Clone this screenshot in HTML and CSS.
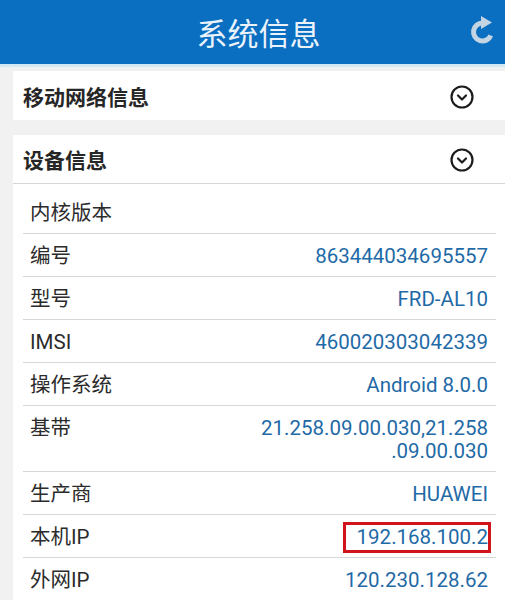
FILE: index.html
```html
<!DOCTYPE html>
<html lang="zh-CN">
<head>
<meta charset="UTF-8" />
<meta name="viewport" content="width=device-width, initial-scale=1.0" />
<title>系统信息</title>
<link rel="stylesheet" href="styles.css">
</head>
<body>
<!-- Title bar -------------------------------------------------------- -->
<header class="topbar">
  <h1>系统信息</h1>
  <button class="refresh" aria-label="刷新">
    <svg width="30" height="32" viewBox="0 0 30 32">
      <path d="M14 9 A9 9 0 1 0 21.8 21.5" fill="none" stroke="#c3d4e3" stroke-width="5" />
      <polygon points="12,2 23,8.5 12,15" fill="#c3d4e3" />
    </svg>
  </button>
</header>

<main class="content">
  <!-- Mobile network (collapsed) ----------------------------------- -->
  <section class="card">
    <div class="card-head">
      <h2>移动网络信息</h2>
      <svg class="chev" width="26" height="26" viewBox="0 0 26 26">
        <circle cx="13" cy="13" r="10.5" fill="none" stroke="#1c1c1c" stroke-width="2.2" />
        <polyline points="9,11.5 13,15.5 17,11.5" fill="none" stroke="#1c1c1c" stroke-width="2.2" stroke-linecap="round" stroke-linejoin="round" />
      </svg>
    </div>
  </section>

  <!-- Device info (expanded) --------------------------------------- -->
  <section class="card">
    <div class="card-head divided">
      <h2>设备信息</h2>
      <svg class="chev" width="26" height="26" viewBox="0 0 26 26">
        <circle cx="13" cy="13" r="10.5" fill="none" stroke="#1c1c1c" stroke-width="2.2" />
        <polyline points="9,11.5 13,15.5 17,11.5" fill="none" stroke="#1c1c1c" stroke-width="2.2" stroke-linecap="round" stroke-linejoin="round" />
      </svg>
    </div>
    <ul class="info-list">
      <li class="row"><span class="label">内核版本</span><span class="value"></span></li>
      <li class="row"><span class="label">编号</span><span class="value">863444034695557</span></li>
      <li class="row"><span class="label">型号</span><span class="value">FRD-AL10</span></li>
      <li class="row"><span class="label">IMSI</span><span class="value">460020303042339</span></li>
      <li class="row"><span class="label">操作系统</span><span class="value">Android 8.0.0</span></li>
      <li class="row"><span class="label">基带</span><span class="value">21.258.09.00.030,21.258<br>.09.00.030</span></li>
      <li class="row"><span class="label">生产商</span><span class="value">HUAWEI</span></li>
      <li class="row"><span class="label">本机IP</span><span class="value marked">192.168.100.2</span></li>
      <li class="row"><span class="label">外网IP</span><span class="value">120.230.128.62</span></li>
    </ul>
  </section>
</main>
</body>
</html>
```

FILE: styles.css
```css
:root {
  --bar: #0a6fc1;
  --bg: #f1f1f1;
  --card: #ffffff;
  --line: #d6d6d6;
  --text: #2b2b2b;
  --value: #1f6aa6;
  --mark: #d0141c;
}
* { box-sizing: border-box; margin: 0; padding: 0; }
html, body {
  background: var(--bg);
  color: var(--text);
  font-family: Roboto, "Noto Sans CJK SC", "Noto Sans", sans-serif;
}

/* --------------------  Title bar  ------------------- */
.topbar {
  height: 67px;
  background: var(--bar);
  border-bottom: 3px solid #d3e8f5;
  display: flex;
  align-items: center;
  justify-content: center;
  position: relative;
}
.topbar h1 {
  font-family: "Noto Sans CJK SC", sans-serif;
  font-size: 31px;
  font-weight: 400;
  color: #eaf3fb;
  margin-left: 12px;
  margin-top: -2px;
}
.refresh {
  position: absolute;
  right: 6px;
  top: 14px;
  border: none;
  background: none;
  line-height: 0;
}

/* --------------------  Cards  ----------------------- */
.content {
  padding: 4px 0 0 13px;
  display: flex;
  flex-direction: column;
  gap: 15px;
}
.card { background: var(--card); }
.card-head {
  height: 49px;
  display: flex;
  align-items: center;
  justify-content: space-between;
  padding: 0 30px 0 10px;
}
.card-head.divided { border-bottom: 1px solid var(--line); }
.card-head h2 {
  font-family: "Noto Sans CJK SC", sans-serif;
  font-size: 21px;
  font-weight: 700;
  color: #262626;
}
.chev { margin-top: 2px; }

/* --------------------  Info rows  ------------------- */
.info-list { list-style: none; padding: 7px 9px 0 10px; }
.row {
  display: flex;
  justify-content: space-between;
  align-items: flex-start;
  padding: 11px 8px 8px 7px;
  line-height: 23px;
  border-bottom: 1px solid var(--line);
  font-size: 20.5px;
}
.label {
  color: var(--text);
  white-space: nowrap;
}
.value {
  color: var(--value);
  text-align: right;
}
.value.marked {
  display: inline-block;
  width: 148px;
  border: 3px solid var(--mark);
  padding: 1px 0;
  margin: -4px -3px -4px 0;
}
```
